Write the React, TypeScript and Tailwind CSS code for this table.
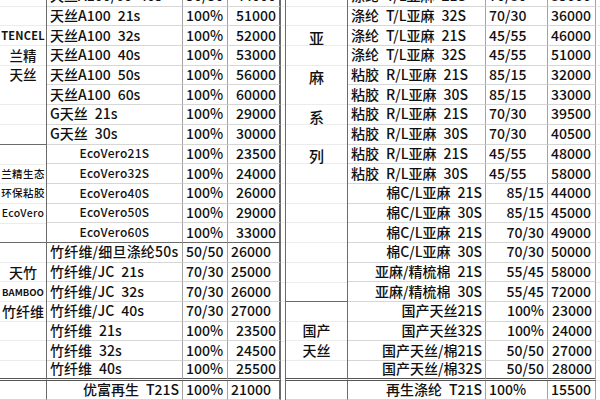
import clsx from 'clsx'

type Align = 'l' | 'c' | 'r'
type Line = 'dark' | 'double' | undefined

interface Row {
  n: string
  na: Align
  r: string
  ra: Align
  p: string
  pa: Align
  nc?: string
  line?: Line
}

const J: Record<Align, string> = { l: 'justify-start', c: 'justify-center', r: 'justify-end' }

const row = (n: string, na: Align, r: string, ra: Align, p: string, pa: Align, line?: Line, nc?: string): Row => ({
  n, na, r, ra, p, pa, line, nc,
})

// spreadsheet text uses half-width spaces, en space keeps the gap
const sp = (s: string) => s.replace(/ /g, '\u2002')

const ECO = 'text-[12px] tracking-[0.3px]'

const LEFT: Row[] = [
  row('天丝A100/60 40s', 'l', '50/50', 'l', '44000', 'r'),
  row('天丝A100 21s', 'l', '100%', 'l', '51000', 'r'),
  row('天丝A100 32s', 'l', '100%', 'l', '52000', 'r'),
  row('天丝A100 40s', 'l', '100%', 'l', '53000', 'r'),
  row('天丝A100 50s', 'l', '100%', 'l', '56000', 'r'),
  row('天丝A100 60s', 'l', '100%', 'l', '60000', 'r'),
  row('G天丝 21s', 'l', '100%', 'l', '29000', 'r'),
  row('G天丝 30s', 'l', '100%', 'l', '30000', 'r'),
  row('EcoVero21S', 'c', '100%', 'l', '23500', 'r', undefined, ECO),
  row('EcoVero32S', 'c', '100%', 'l', '24000', 'r', undefined, ECO),
  row('EcoVero40S', 'c', '100%', 'l', '26000', 'r', undefined, ECO),
  row('EcoVero50S', 'c', '100%', 'l', '29000', 'r', undefined, ECO),
  row('EcoVero60S', 'c', '100%', 'l', '33000', 'r', 'dark', ECO),
  row('竹纤维/细旦涤纶50s', 'l', '50/50', 'l', '26000', 'l', undefined, 'text-[14px] tracking-[0.2px]'),
  row('竹纤维/JC 21s', 'l', '70/30', 'l', '25000', 'l'),
  row('竹纤维/JC 32s', 'l', '70/30', 'l', '26000', 'l'),
  row('竹纤维/JC 40s', 'l', '70/30', 'l', '27000', 'l'),
  row('竹纤维 21s', 'l', '100%', 'l', '23500', 'r'),
  row('竹纤维 32s', 'l', '100%', 'l', '24500', 'r'),
  row('竹纤维 40s', 'l', '100%', 'l', '25500', 'r', 'double'),
  row('优富再生 T21S', 'r', '100%', 'l', '21000', 'l'),
]

const RIGHT: Row[] = [
  row('涤纶 T/L亚麻 21S', 'l', '70/30', 'l', '35000', 'l'),
  row('涤纶 T/L亚麻 32S', 'l', '70/30', 'l', '36000', 'l'),
  row('涤纶 T/L亚麻 21S', 'l', '45/55', 'l', '46000', 'l'),
  row('涤纶 T/L亚麻 32S', 'l', '45/55', 'l', '51000', 'l'),
  row('粘胶 R/L亚麻 21S', 'l', '85/15', 'l', '32000', 'l'),
  row('粘胶 R/L亚麻 30S', 'l', '85/15', 'l', '33000', 'l'),
  row('粘胶 R/L亚麻 21S', 'l', '70/30', 'l', '39500', 'l'),
  row('粘胶 R/L亚麻 30S', 'l', '70/30', 'l', '40500', 'l'),
  row('粘胶 R/L亚麻 21S', 'l', '45/55', 'l', '48000', 'l'),
  row('粘胶 R/L亚麻 30S', 'l', '45/55', 'l', '58000', 'l'),
  row('棉C/L亚麻 21S', 'r', '85/15', 'r', '44000', 'l'),
  row('棉C/L亚麻 30S', 'r', '85/15', 'r', '45000', 'l'),
  row('棉C/L亚麻 21S', 'r', '70/30', 'r', '49000', 'l'),
  row('棉C/L亚麻 30S', 'r', '70/30', 'r', '50000', 'l'),
  row('亚麻/精梳棉 21S', 'r', '55/45', 'r', '58000', 'l'),
  row('亚麻/精梳棉 30S', 'r', '55/45', 'r', '72000', 'l'),
  row('国产天丝21S', 'r', '100%', 'r', '23000', 'r'),
  row('国产天丝32S', 'r', '100%', 'r', '24000', 'r'),
  row('国产天丝/棉21S', 'r', '50/50', 'r', '27000', 'r'),
  row('国产天丝/棉32S', 'r', '50/50', 'r', '28000', 'r', 'double'),
  row('再生涤纶 T21S', 'r', '100%', 'l', '15500', 'l'),
]

const GRID_BG =
  'bg-[image:repeating-linear-gradient(to_bottom,transparent_0px,transparent_18.7px,#ececec_18.7px,#ececec_19.7px)]'

function bottom(line: Line) {
  if (line === 'double') return 'border-b-[3px] border-double border-b-[#555]'
  if (line === 'dark') return 'border-b border-b-[#6b6b6b]'
  return 'border-b border-b-[#d6d6d6]'
}

function Cell({ text, align, right, line, extra }: { text: string; align: Align; right: string; line: Line; extra?: string }) {
  return (
    <div className={clsx('flex items-center whitespace-pre overflow-hidden px-[3px] pb-[1px]', J[align], right, bottom(line), extra)}>
      {sp(text)}
    </div>
  )
}

function Cells({ rows, lastRight }: { rows: Row[]; lastRight: string }) {
  return (
    <>
      {rows.map((r, i) => (
        <div key={i} className="contents">
          <Cell text={r.n} align={r.na} right="border-r border-r-[#a3a3a3]" line={r.line} extra={r.nc} />
          <Cell text={r.r} align={r.ra} right="border-r border-r-[#a3a3a3]" line={r.line} />
          <Cell text={r.p} align={r.pa} right={lastRight} line={r.line} />
        </div>
      ))}
    </>
  )
}

const LH = 'leading-[19.7px]'

export default function App() {
  return (
    <div
      className="w-[600px] h-[400px] overflow-hidden bg-white text-[#111] font-medium text-[14px]"
      style={{ fontFamily: '"Noto Sans CJK SC", "Noto Sans", sans-serif' }}
    >
      <div className="flex mt-[-13px]">
        {/* left sheet */}
        <div className="grid grid-cols-[47px_136px_45px_53px] grid-rows-[repeat(21,19.7px)] shrink-0">
          <div className={clsx('col-start-1 row-start-1 row-span-8 flex flex-col items-center pt-[39px] border-r border-r-[#6b6b6b] border-b border-b-[#6b6b6b]', GRID_BG)}>
            <span className={clsx('text-[11px] font-bold tracking-[0.2px]', LH)}>TENCEL</span>
            <span className={clsx('text-[13.5px]', LH)}>兰精</span>
            <span className={clsx('text-[13.5px]', LH)}>天丝</span>
          </div>
          <div className={clsx('col-start-1 row-start-9 row-span-5 flex flex-col items-center justify-center border-r border-r-[#6b6b6b] border-b border-b-[#6b6b6b]', GRID_BG)}>
            <span className={clsx('text-[10.5px] tracking-[0.4px]', LH)}>兰精生态</span>
            <span className={clsx('text-[10.5px] tracking-[0.4px]', LH)}>环保粘胶</span>
            <span className={clsx('text-[10.5px] tracking-[0.3px]', LH)}>EcoVero</span>
          </div>
          <div className={clsx('col-start-1 row-start-14 row-span-7 flex flex-col items-center pt-[20px] border-r border-r-[#6b6b6b] border-b-[3px] border-double border-b-[#555]', GRID_BG)}>
            <span className={clsx('text-[14px]', LH)}>天竹</span>
            <span className={clsx('text-[9.5px] font-bold', LH)}>BAMBOO</span>
            <span className={clsx('text-[14px]', LH)}>竹纤维</span>
          </div>
          <div className="col-start-1 row-start-21 border-r border-r-[#6b6b6b] border-b border-b-[#d6d6d6]" />
          <Cells rows={LEFT} lastRight="border-r-2 border-r-[#6b6b6b]" />
        </div>

        {/* gap column */}
        <div className={clsx('w-[5px] shrink-0 h-[413.7px] border-r border-r-[#6b6b6b]', GRID_BG)} />

        {/* right sheet */}
        <div className="grid grid-cols-[62px_138px_62px_48px] grid-rows-[repeat(21,19.7px)] shrink-0">
          <div className={clsx('col-start-1 row-start-1 row-span-16 flex flex-col items-center pt-[31px] border-r border-r-[#6b6b6b] border-b border-b-[#6b6b6b]', GRID_BG)}>
            {['亚', '麻', '系', '列'].map((c) => (
              <span key={c} className="text-[15px] leading-[39.4px]">{c}</span>
            ))}
          </div>
          <div className={clsx('col-start-1 row-start-17 row-span-4 flex flex-col items-center justify-center border-r border-r-[#6b6b6b] border-b-[3px] border-double border-b-[#555]', GRID_BG)}>
            <span className="text-[14px] leading-[20px]">国产</span>
            <span className="text-[14px] leading-[20px]">天丝</span>
          </div>
          <div className="col-start-1 row-start-21 border-r border-r-[#6b6b6b] border-b border-b-[#d6d6d6]" />
          <Cells rows={RIGHT} lastRight="border-r border-r-[#a3a3a3]" />
        </div>

        <div className={clsx('flex-1 h-[413.7px]', GRID_BG)} />
      </div>
    </div>
  )
}
